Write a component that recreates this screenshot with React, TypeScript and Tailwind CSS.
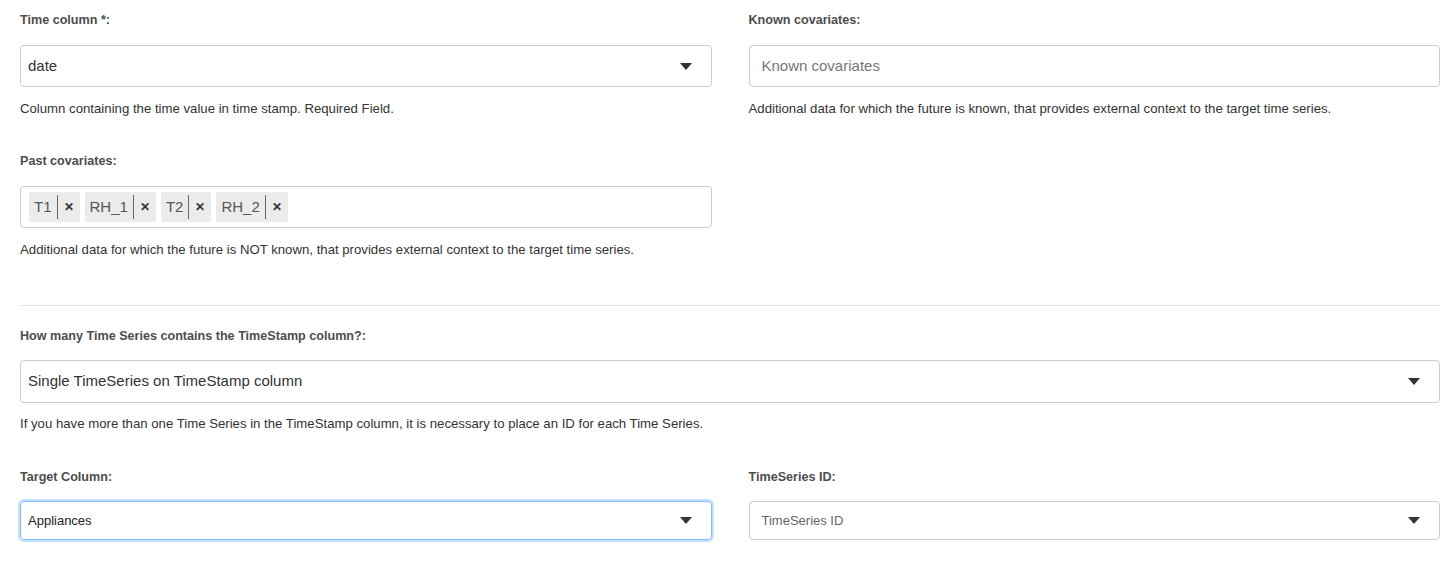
const font = { fontFamily: '"Liberation Sans", Arial, sans-serif' };

function Caret() {
  return (
    <svg width="12" height="7" viewBox="0 0 12 7" className="shrink-0">
      <path d="M0 0 L12 0 L6 7 Z" fill="#333" />
    </svg>
  );
}

function Label({ children }: { children: React.ReactNode }) {
  return <p className="text-[12.6px] font-bold leading-4 text-[#4d4d4d]">{children}</p>;
}

function Help({ children }: { children: React.ReactNode }) {
  return <p className="text-[13.2px] leading-4 text-[#333]">{children}</p>;
}

function Chip({ text }: { text: string }) {
  return (
    <span className="flex h-[30px] items-center rounded-[2px] bg-[#ebebeb] text-[15px] text-[#555]">
      <span className="px-[5px]">{text}</span>
      <span className="h-[24px] w-px bg-[#666]" />
      <span className="px-[6px] text-[12px] font-bold text-[#333]">✕</span>
    </span>
  );
}

export default function App() {
  const chips = ['T1', 'RH_1', 'T2', 'RH_2'];

  return (
    <div className="min-h-[561px] bg-white pl-5 pr-2 pt-3" style={font}>
      <div className="grid grid-cols-2 gap-x-[37px]">
        <div>
          <Label>Time column *:</Label>
          <div className="mt-[17px] flex h-[42px] items-center justify-between rounded-[4px] border border-[#ccc] pl-[7px] pr-[19px] text-[15px] text-[#333]">
            <span>date</span>
            <Caret />
          </div>
          <div className="mt-[14px]">
            <Help>Column containing the time value in time stamp. Required Field.</Help>
          </div>
        </div>
        <div>
          <Label>Known covariates:</Label>
          <div className="mt-[17px] flex h-[42px] items-center rounded-[4px] border border-[#ccc] px-[12px] text-[15px] text-[#777]">
            Known covariates
          </div>
          <div className="mt-[14px]">
            <Help>Additional data for which the future is known, that provides external context to the target time series.</Help>
          </div>
        </div>

        <div className="mt-9">
          <Label>Past covariates:</Label>
          <div className="mt-[17px] flex h-[42px] items-center gap-[5px] rounded-[4px] border border-[#ccc] px-[8px]">
            {chips.map((c) => (
              <Chip key={c} text={c} />
            ))}
          </div>
          <div className="mt-[14px]">
            <Help>Additional data for which the future is NOT known, that provides external context to the target time series.</Help>
          </div>
        </div>
        <div />
      </div>

      <div className="mb-[22px] mt-[47px] h-px bg-[#e5e5e5]" />

      <Label>How many Time Series contains the TimeStamp column?:</Label>
      <div className="mt-4 flex h-[43px] items-center justify-between rounded-[4px] border border-[#ccc] pl-[7px] pr-[19px] text-[15px] text-[#333]">
        <span>Single TimeSeries on TimeStamp column</span>
        <Caret />
      </div>
      <div className="mt-[13px]">
        <Help>If you have more than one Time Series in the TimeStamp column, it is necessary to place an ID for each Time Series.</Help>
      </div>

      <div className="mt-[37px] grid grid-cols-2 gap-x-[37px]">
        <div>
          <Label>Target Column:</Label>
          <div className="mt-4 flex h-[39px] items-center justify-between rounded-[4px] border border-[#80bdff] pl-[7px] pr-[19px] text-[13px] text-[#222] shadow-[0_0_0_2px_rgba(128,189,255,0.45)]">
            <span>Appliances</span>
            <Caret />
          </div>
        </div>
        <div>
          <Label>TimeSeries ID:</Label>
          <div className="mt-4 flex h-[39px] items-center justify-between rounded-[4px] border border-[#ccc] pl-[12px] pr-[19px] text-[13px] text-[#666]">
            <span>TimeSeries ID</span>
            <Caret />
          </div>
        </div>
      </div>
    </div>
  );
}
